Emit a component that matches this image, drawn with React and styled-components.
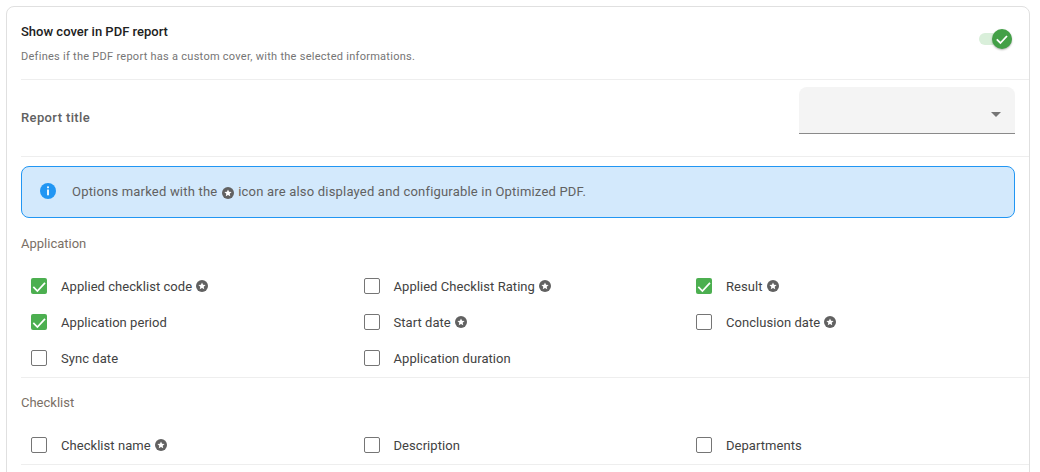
import React from 'react'
import styled, { createGlobalStyle } from 'styled-components'

const GlobalStyle = createGlobalStyle`
    html, body {
        margin: 0;
        padding: 0;
        background: #fff;
        overflow: hidden;
    }
    body {
        font-family: Roboto, "Liberation Sans", sans-serif;
    }
`

const StarBadge = ({ size = 12 }) => (
    <StarIcon width={size} height={size} viewBox="0 0 24 24">
        <circle cx="12" cy="12" r="12" fill="#616161" />
        <path fill="#fff" d="M12 5l2.1 4.7 5.1.5-3.8 3.4 1.1 5L12 16l-4.5 2.6 1.1-5-3.8-3.4 5.1-.5z" />
    </StarIcon>
)

const Option = ({ label, checked, star }) => (
    <OptionRow>
        <Box $checked={checked}>
            {checked && (
                <svg width="16" height="16" viewBox="0 0 16 16">
                    <path d="M2.3 8.9l4.1 4.1 7.6-8.1" fill="none" stroke="#fff" strokeWidth="1.7" />
                </svg>
            )}
        </Box>
        <OptionLabel>{label}</OptionLabel>
        {star && <StarBadge />}
    </OptionRow>
)

const App = () => {
    return (
        <>
            <GlobalStyle />
            <Page>
                <Card>
                    <CoverRow>
                        <div>
                            <CoverTitle>Show cover in PDF report</CoverTitle>
                            <CoverText>Defines if the PDF report has a custom cover, with the selected informations.</CoverText>
                        </div>
                        <Toggle>
                            <ToggleThumb>
                                <svg width="18" height="18" viewBox="0 0 18 18">
                                    <path d="M3.8 9.4l3.6 3.6 6.6-7" fill="none" stroke="#fff" strokeWidth="1.8" />
                                </svg>
                            </ToggleThumb>
                        </Toggle>
                    </CoverRow>

                    <TitleRow>
                        <TitleLabel>Report title</TitleLabel>
                        <SelectField>
                            <SelectArrow />
                        </SelectField>
                    </TitleRow>

                    <AlertWrap>
                        <Alert>
                            <svg width="16" height="16" viewBox="0 0 16 16">
                                <circle cx="8" cy="8" r="8" fill="#2196f3" />
                                <rect x="7.1" y="3.4" width="1.8" height="1.8" fill="#fff" />
                                <rect x="7.1" y="6.5" width="1.8" height="5.8" fill="#fff" />
                            </svg>
                            <AlertText>
                                Options marked with the <StarBadge /> icon are also displayed and configurable in Optimized PDF.
                            </AlertText>
                        </Alert>
                    </AlertWrap>

                    <Section>
                        <SectionTitle>Application</SectionTitle>
                        <OptionGrid>
                            <Option label="Applied checklist code" checked star />
                            <Option label="Applied Checklist Rating" star />
                            <Option label="Result" checked star />
                            <Option label="Application period" checked />
                            <Option label="Start date" star />
                            <Option label="Conclusion date" star />
                            <Option label="Sync date" />
                            <Option label="Application duration" />
                        </OptionGrid>
                    </Section>

                    <Section>
                        <SectionTitle>Checklist</SectionTitle>
                        <OptionGrid>
                            <Option label="Checklist name" star />
                            <Option label="Description" />
                            <Option label="Departments" />
                        </OptionGrid>
                    </Section>
                </Card>
            </Page>
        </>
    )
}

export default App

const Page = styled.div`
    width: 1040px;
    height: 472px;
    padding: 6px 10px 0 6px;
    box-sizing: border-box;
    overflow: hidden;
`

const Card = styled.div`
    border: 1px solid #e0e0e0;
    border-radius: 8px;
    padding-left: 14px;
    height: 600px;
    box-sizing: border-box;
`

const CoverRow = styled.div`
    display: flex;
    justify-content: space-between;
    align-items: center;
    height: 73px;
    padding-right: 17px;
    border-bottom: 1px solid #eeeeee;
    box-sizing: border-box;
`

const CoverTitle = styled.div`
    font-size: 13px;
    font-weight: 500;
    line-height: 18px;
    color: #212121;
`

const CoverText = styled.div`
    font-size: 11px;
    line-height: 14px;
    margin-top: 9px;
    letter-spacing: 0.27px;
    color: #757575;
`

const Toggle = styled.div`
    position: relative;
    width: 33px;
    height: 12px;
    margin-bottom: 8px;
    border-radius: 6px;
    background: #d9efda;
`

const ToggleThumb = styled.div`
    position: absolute;
    right: 0;
    top: -4px;
    width: 20px;
    height: 20px;
    border-radius: 50%;
    background: #43a047;
    display: flex;
    align-items: center;
    justify-content: center;
    box-shadow: 0 1px 2px rgba(0, 0, 0, 0.3);
`

const TitleRow = styled.div`
    display: flex;
    justify-content: space-between;
    align-items: flex-start;
    height: 77px;
    padding-right: 14px;
    border-bottom: 1px solid #eeeeee;
    box-sizing: border-box;
`

const TitleLabel = styled.div`
    font-size: 13px;
    font-weight: 500;
    line-height: 16px;
    color: #616161;
    margin-top: 30px;
    letter-spacing: 0.38px;
`

const SelectField = styled.div`
    position: relative;
    width: 216px;
    height: 47px;
    margin-top: 7px;
    background: #f4f4f4;
    border-radius: 8px 8px 0 0;
    border-bottom: 1px solid #8a8a8a;
    box-sizing: border-box;
`

const SelectArrow = styled.div`
    position: absolute;
    right: 14px;
    top: 25px;
    border-left: 5px solid transparent;
    border-right: 5px solid transparent;
    border-top: 5px solid #757575;
`

const AlertWrap = styled.div`
    padding: 9px 14px 1px 0;
`

const Alert = styled.div`
    display: flex;
    align-items: center;
    gap: 16px;
    height: 52px;
    padding: 0 0 2px 18px;
    background: #d3e9fc;
    border: 1px solid #2196f3;
    border-radius: 8px;
    box-sizing: border-box;
`

const AlertText = styled.div`
    font-size: 13px;
    letter-spacing: 0.195px;
    color: #616161;

    svg {
        margin: 0 1px;
    }
`

const StarIcon = styled.svg`
    vertical-align: -3px;
    flex-shrink: 0;
`

const Section = styled.div`
    border-bottom: 1px solid #eeeeee;
`

const SectionTitle = styled.div`
    font-size: 13px;
    line-height: 16px;
    padding-top: 17px;
    color: #7a6f66;
`

const OptionGrid = styled.div`
    display: grid;
    grid-template-columns: repeat(3, 332.5px);
    grid-auto-rows: 36px;
    padding: 16px 0 1px 10px;
`

const OptionRow = styled.div`
    display: flex;
    align-items: center;
`

const Box = styled.div`
    width: 16px;
    height: 16px;
    box-sizing: border-box;
    border-radius: 2px;
    border: ${(props) => (props.$checked ? 'none' : '1px solid #757575')};
    background: ${(props) => (props.$checked ? '#4caf50' : '#fff')};
    margin-right: 14px;
    display: flex;
    align-items: center;
    justify-content: center;
`

const OptionLabel = styled.span`
    font-size: 13px;
    letter-spacing: 0.05px;
    color: #424242;
    margin-right: 4px;
`
